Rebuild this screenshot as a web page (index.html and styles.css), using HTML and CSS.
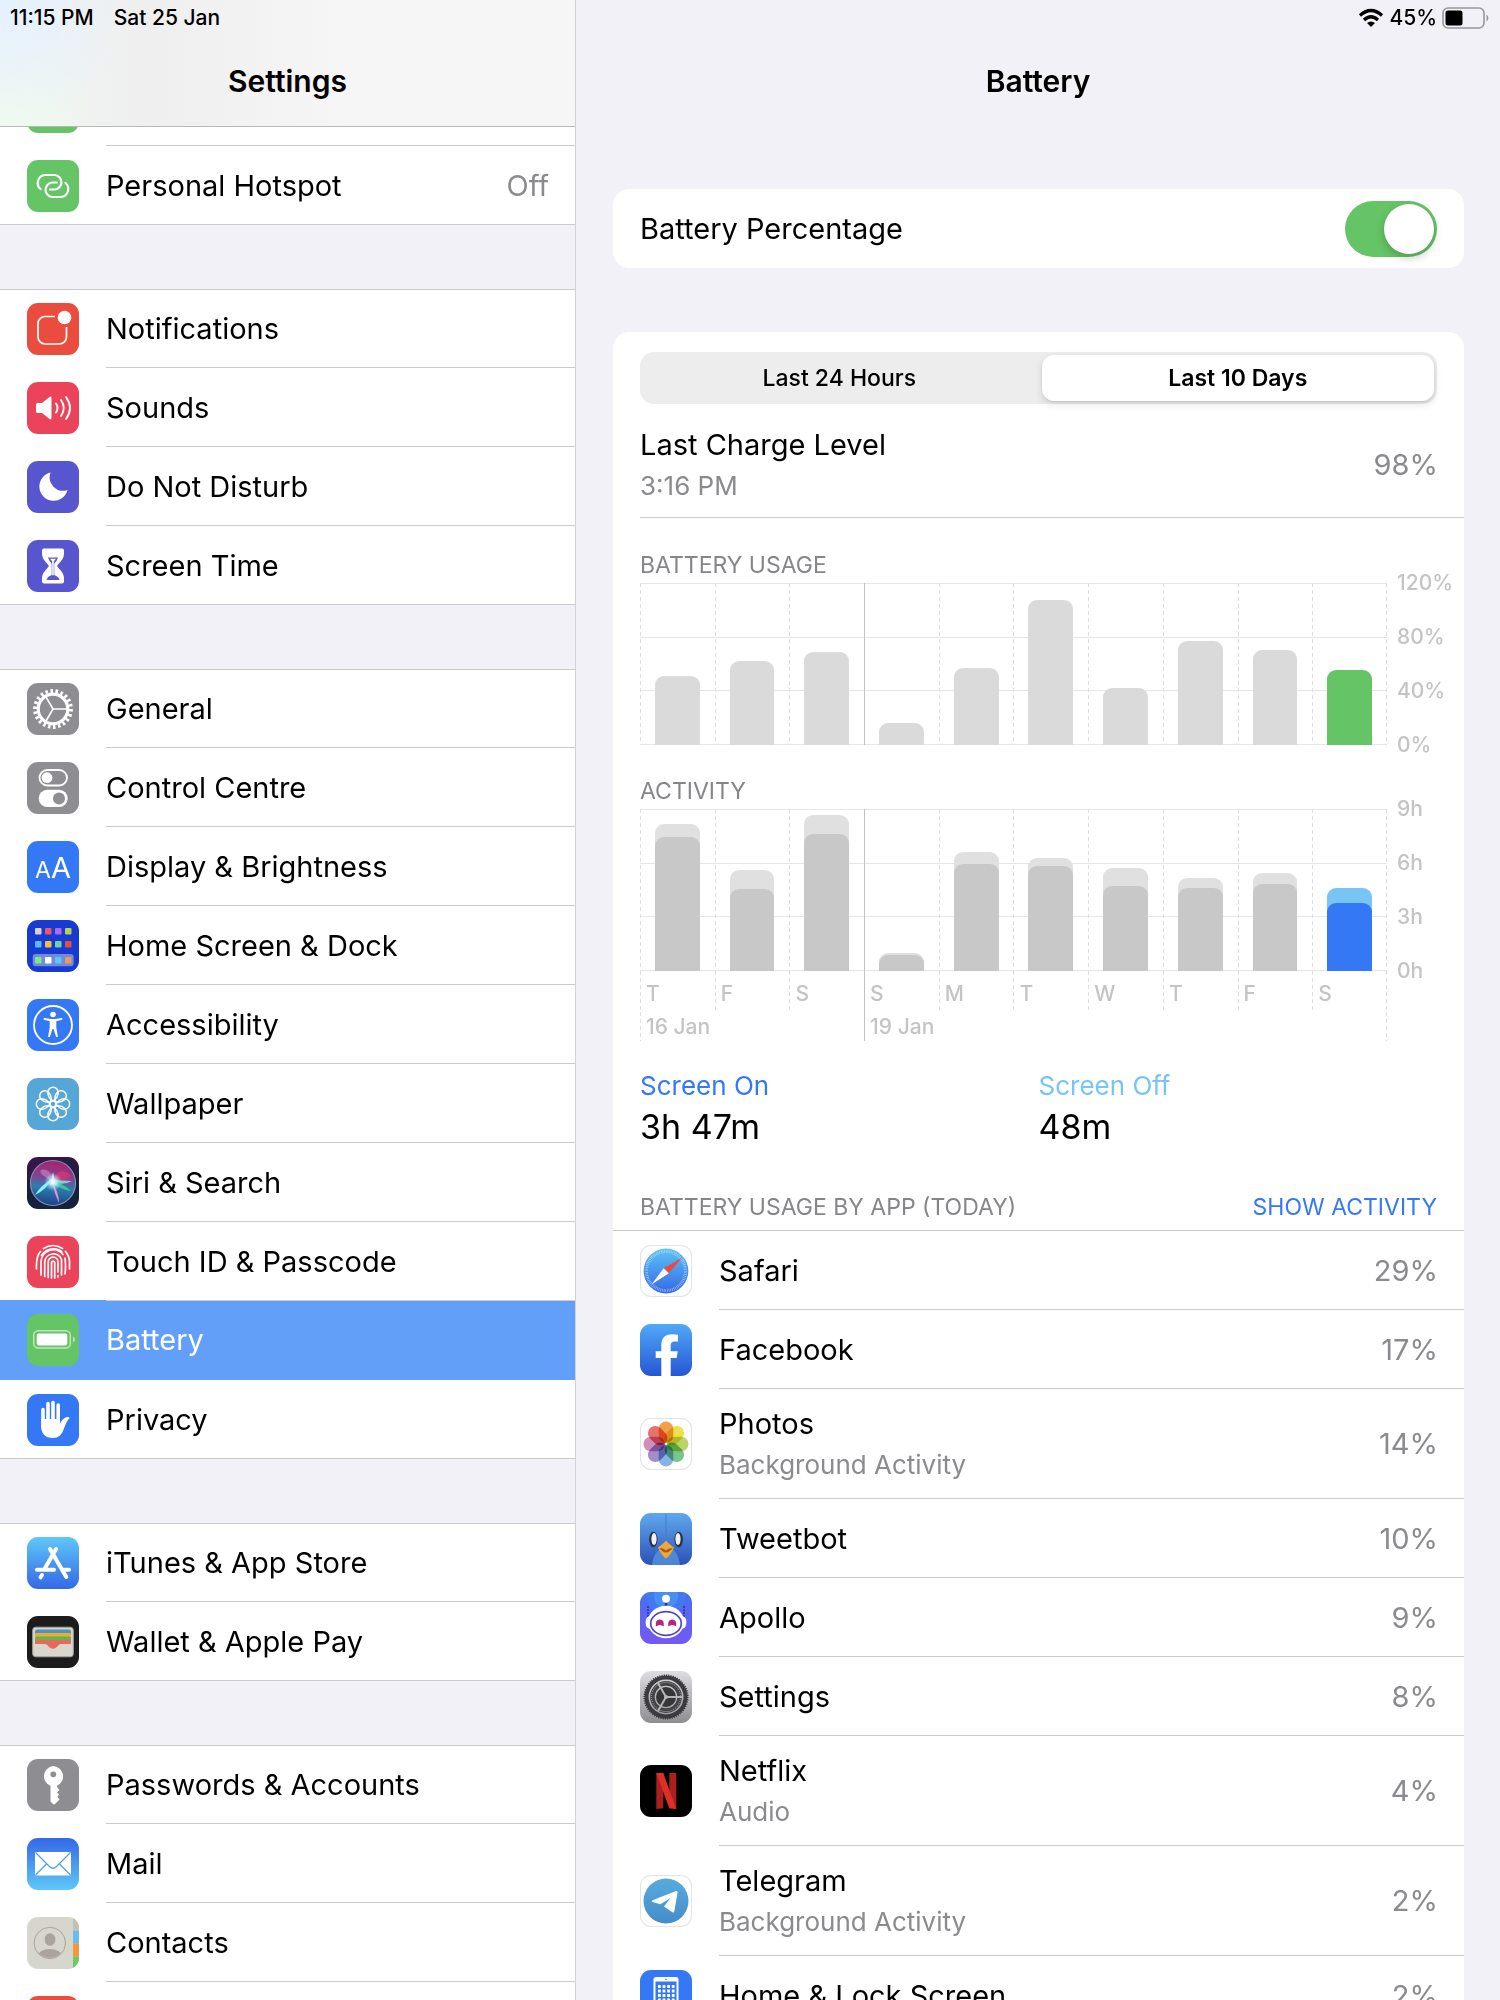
FILE: index.html
```html
<!DOCTYPE html>
<html lang="en">
<head>
<meta charset="utf-8">
<meta name="viewport" content="width=device-width, initial-scale=1">
<title>Settings</title>
<link rel="stylesheet" href="styles.css">
</head>
<body>
<div class="app">
  <nav class="sidebar" aria-label="Settings">
    <header class="bar bar-side">
      <div class="status"><span>11:15 PM</span><span>Sat 25 Jan</span></div>
      <h1 class="title">Settings</h1>
    </header>

    <div class="list">
      <div class="group">
        <a class="row" href="#"><span class="icon green"></span><span class="cell"></span></a>
        <a class="row" href="#">
          <svg class="icon green" viewBox="0 0 52 52" fill="none" stroke="#fff" stroke-width="2.2" stroke-linecap="round"><path d="M13.5 29A8 8 0 0 1 18 15H28A7.3 7.3 0 0 1 28 29.5H23M30 22.5H25A7.3 7.3 0 0 0 25 37H34A8 8 0 0 0 38.500 23"/></svg>
          <span class="cell"><span>Personal Hotspot</span><span class="value">Off</span></span>
        </a>
      </div>

      <div class="group">
        <a class="row" href="#">
          <svg class="icon red" viewBox="0 0 52 52"><path d="M28 13.500H18a7 7 0 0 0-7 7V34a7 7 0 0 0 7 7H32.500a7 7 0 0 0 7-7V24" fill="none" stroke="#fff" stroke-width="1.700"/><circle cx="37.500" cy="14.500" r="6.800" fill="#fff"/></svg>
          <span class="cell">Notifications</span>
        </a>
        <a class="row" href="#">
          <svg class="icon pink" viewBox="0 0 52 52"><path d="M9 22.500q0-1.500 1.500-1.500H15l7.500-6q2-1.200 2 1v20q0 2.200-2 1L15 31h-4.500Q9 31 9 29.500z" fill="#fff"/><path d="M29 21.500q3 4.500 0 9M34 18q5.500 8 0 16M39 15q8 11 0 22" fill="none" stroke="#fff" stroke-width="1.900" stroke-linecap="round"/></svg>
          <span class="cell">Sounds</span>
        </a>
        <a class="row" href="#">
          <svg class="icon indigo" viewBox="0 0 52 52"><path d="M23.500 11.500A14.300 14.300 0 1 0 40.500 29A13.500 13.500 0 0 1 23.500 11.500Z" fill="#fff"/></svg>
          <span class="cell">Do Not Disturb</span>
        </a>
        <a class="row" href="#">
          <svg class="icon indigo" viewBox="0 0 52 52"><path d="M15 10.500q0-2 2-2h18q2 0 2 2v3c0 6-4 8-7 12.500c3 4.500 7 6.500 7 12.500v3q0 2-2 2H17q-2 0-2-2v-3c0-6 4-8 7-12.500c-3-4.500-7-6.500-7-12.500z" fill="#fff"/><path d="M21 17.500h10q-1 3.500-3.700 6v11.500q4.500 1.500 5.200 5h-13q.7-3.500 5.200-5V23.500q-2.700-2.500-3.700-6z" fill="#5856cf"/><path d="M23 18.700h6l-2.200 2.500v14h-1.600v-14z" fill="#fff"/></svg>
          <span class="cell">Screen Time</span>
        </a>
      </div>

      <div class="group">
        <a class="row" href="#">
          <svg class="icon gray" viewBox="0 0 52 52" fill="none" stroke="#fff"><circle cx="26" cy="26" r="14.800" stroke-width="3.200"/><circle cx="26" cy="26" r="18" stroke-width="3.800" pathLength="44" stroke-dasharray="1 1"/><path d="M26 26H40M26 26L19 14M26 26L19 38" stroke-width="1.600"/></svg>
          <span class="cell">General</span>
        </a>
        <a class="row" href="#">
          <svg class="icon gray" viewBox="0 0 52 52"><rect x="12.500" y="8" width="27.500" height="15.500" rx="7.750" fill="none" stroke="#fff" stroke-width="1.800"/><circle cx="20" cy="15.700" r="5.400" fill="#fff"/><rect x="11.700" y="27.800" width="29" height="17.200" rx="8.600" fill="#fff"/><circle cx="32" cy="36.400" r="6" fill="#8e8d92"/></svg>
          <span class="cell">Control Centre</span>
        </a>
        <a class="row" href="#">
          <svg class="icon blue" viewBox="0 0 52 52" fill="#fff" text-anchor="middle"><text class="aa" x="16" y="37" font-size="23">A</text><text class="aa" x="34" y="37" font-size="29">A</text></svg>
          <span class="cell">Display &amp; Brightness</span>
        </a>
        <a class="row" href="#">
          <svg class="icon navy" viewBox="0 0 52 52"><rect x="5.700" y="34" width="41" height="12.300" rx="3" fill="#6f8ade"/><g><rect x="8" y="8" width="6.500" height="6.500" rx="1" fill="#d4d3d0"/><rect x="18" y="8" width="6.500" height="6.500" rx="1" fill="#ee5563"/><rect x="28" y="8" width="6.500" height="6.500" rx="1" fill="#ab6cf0"/><rect x="38" y="8" width="6.500" height="6.500" rx="1" fill="#b9cf52"/><rect x="8" y="21" width="6.500" height="6.500" rx="1" fill="#5bbcf5"/><rect x="18" y="21" width="6.500" height="6.500" rx="1" fill="#f6bd3f"/><rect x="28" y="21" width="6.500" height="6.500" rx="1" fill="#6fd3a4"/><rect x="38" y="21" width="6.500" height="6.500" rx="1" fill="#e84c39"/><rect x="8" y="37" width="6.500" height="6.500" rx="1" fill="#7deb7c"/><rect x="18" y="37" width="6.500" height="6.500" rx="1" fill="#fff"/><rect x="28" y="37" width="6.500" height="6.500" rx="1" fill="#5ec6f6"/><rect x="38" y="37" width="6.500" height="6.500" rx="1" fill="#f19a4f"/></g></svg>
          <span class="cell">Home Screen &amp; Dock</span>
        </a>
        <a class="row" href="#">
          <svg class="icon blue" viewBox="0 0 52 52"><circle cx="26" cy="26" r="19" fill="none" stroke="#fff" stroke-width="1.900"/><circle cx="26" cy="15.500" r="2.800" fill="#fff"/><path d="M17 19l7 1h4l7-1q1.200.8 0 1.800l-5.700 1.400v6.300l1.600 9q-.9 1.200-1.900.1L26.500 30h-1L23 37.600q-1 1.100-1.900-.1l1.600-9v-6.300L17 20.800q-1.200-1 0-1.800z" fill="#fff"/></svg>
          <span class="cell">Accessibility</span>
        </a>
        <a class="row" href="#">
          <svg class="icon sky" viewBox="0 0 52 52" fill="none" stroke="#fff" stroke-width="1.500"><defs><path id="petal" d="M26 22.800Q21 20 20.800 14.500A5.200 5.200 0 1 1 31.200 14.500Q31 20 26 22.800Z"/></defs><circle cx="26" cy="26" r="3"/><use href="#petal"/><use href="#petal" transform="rotate(45 26 26)"/><use href="#petal" transform="rotate(90 26 26)"/><use href="#petal" transform="rotate(135 26 26)"/><use href="#petal" transform="rotate(180 26 26)"/><use href="#petal" transform="rotate(225 26 26)"/><use href="#petal" transform="rotate(270 26 26)"/><use href="#petal" transform="rotate(315 26 26)"/></svg>
          <span class="cell">Wallpaper</span>
        </a>
        <a class="row" href="#">
          <svg class="icon siri" viewBox="0 0 52 52"><defs><linearGradient id="orb" x1="0.500" y1="0" x2="0.400" y2="1"><stop offset="0" stop-color="#a3246c"/><stop offset=".35" stop-color="#8a3f8e"/><stop offset=".6" stop-color="#2b7fae"/><stop offset="1" stop-color="#1d3f86"/></linearGradient><radialGradient id="glow"><stop offset="0" stop-color="#fff"/><stop offset=".4" stop-color="#c8f4ff" stop-opacity=".8"/><stop offset="1" stop-color="#7fe3f5" stop-opacity="0"/></radialGradient></defs><circle cx="26" cy="26" r="22.500" fill="url(#orb)" stroke="#8391ad" stroke-width="1.200"/><path d="M27 24C28 15 36 10 43 18C44 22 34 24 27 24z" fill="#d8356f" opacity=".8"/><path d="M25 24C18 20 11 16 14 13C20 11 26 17 27 24z" fill="#c98ac6" opacity=".6"/><path d="M26 23L45 24Q36 29 26 25z" fill="#8be8dc" opacity=".8"/><path d="M26 23Q38 28 44 34Q33 32 25 26z" fill="#39c59a"/><path d="M25 22Q20 32 8 38Q14 28 25 22z" fill="#8df1ff"/><path d="M25 25Q32 35 32 46Q27 36 25 25z" fill="#e98cd0"/><path d="M26 15L28 26L23 28z" fill="#e6f8ff"/><circle cx="26" cy="25" r="9" fill="url(#glow)"/></svg>
          <span class="cell">Siri &amp; Search</span>
        </a>
        <a class="row" href="#">
          <svg class="icon pink" viewBox="0 0 52 52" fill="none" stroke="#fff" stroke-width="1.700" stroke-linecap="round"><path d="M16.500 12.500Q26 6.500 35.500 12.500M13.500 15.500Q9 20 9.500 33M14 39V26A12.300 12.300 0 0 1 36 18.500M38.500 15.500Q43 21 42.500 27V33M38 22Q39 30 38 38M17.700 40.500V26A8.700 8.700 0 0 1 34.500 23.500V39M21.200 41.500V26A4.900 4.900 0 0 1 31 26V36M31 39.500V41M24.500 42V26.500Q26 23.500 27.700 26.500V42"/><path d="M14.500 19.500Q19 12.500 27 12.800Q32 13 35 16"/></svg>
          <span class="cell">Touch ID &amp; Passcode</span>
        </a>
        <a class="row current" href="#" aria-current="page">
          <svg class="icon green" viewBox="0 0 52 52"><rect x="6.700" y="16.800" width="36.600" height="17.200" rx="4.500" fill="none" stroke="#bfe6bb" stroke-width="1.500"/><rect x="9.700" y="19.500" width="30.600" height="12" rx="2.200" fill="#fff"/><path d="M46 22.500q4 3 0 6z" fill="#bfe6bb"/></svg>
          <span class="cell">Battery</span>
        </a>
        <a class="row" href="#">
          <svg class="icon blue" viewBox="0 0 52 52"><path d="M16 15.500V33M21 9.500V30M26 8.500V30M31.200 11V30" stroke="#fff" stroke-width="3.600" stroke-linecap="round"/><path d="M14.200 25H33v4.500q2.500-5 6-6.300q3.500-.7 3.600.7q-3.100 3-5.600 10.600q-3 9.500-11 9.500q-11.800 0-11.800-12z" fill="#fff"/></svg>
          <span class="cell">Privacy</span>
        </a>
      </div>

      <div class="group">
        <a class="row" href="#">
          <svg class="icon store" viewBox="0 0 52 52" fill="none" stroke="#fff" stroke-width="4" stroke-linecap="round"><path d="M23 12L39.300 40M29 12L17.500 32M10 32.700H27M36.500 32.700H42M15 38L13.500 40.300"/></svg>
          <span class="cell">iTunes &amp; App Store</span>
        </a>
        <a class="row" href="#">
          <svg class="icon black" viewBox="0 0 52 52"><rect x="5.700" y="11.200" width="40.600" height="29.600" rx="3" fill="#d8d7cd" stroke="#a3a29a" stroke-width="1"/><rect x="8" y="13.500" width="36" height="8" rx="2" fill="#4b93c4"/><rect x="8" y="17" width="36" height="6" rx="1.500" fill="#f0ab35"/><rect x="8" y="20.500" width="36" height="6" rx="1.500" fill="#63b54f"/><path d="M8 25.500q0-1.500 1.500-1.500h33q1.500 0 1.500 1.500V28H34c-3 0-4 4.800-8 4.800S21 28 18 28H8z" fill="#e8695c"/></svg>
          <span class="cell">Wallet &amp; Apple Pay</span>
        </a>
      </div>

      <div class="group">
        <a class="row" href="#">
          <svg class="icon gray" viewBox="0 0 52 52"><path d="M26 7a10.300 10.300 0 0 1 4 19.700v1.300l2.500 3l-2.500 2.500l2 2l-1.500 2l2 3l-4.500 4.500q-1 .8-2 0l-2.500-2.500V26.800A10.300 10.300 0 0 1 26 7z" fill="#fff"/><circle cx="26.300" cy="15.300" r="2.900" fill="#8e8d92"/></svg>
          <span class="cell">Passwords &amp; Accounts</span>
        </a>
        <a class="row" href="#">
          <svg class="icon mail" viewBox="0 0 52 52"><rect x="8" y="14" width="36" height="23.500" rx="1" fill="#fff"/><path d="M8.500 14.500L22.500 28.500Q26 32 29.500 28.500L43.500 14.500M8.500 37L19.500 26M43.500 37L32.500 26" fill="none" stroke="#4f9df3" stroke-width="1.200"/></svg>
          <span class="cell">Mail</span>
        </a>
        <a class="row" href="#">
          <svg class="icon contacts" viewBox="0 0 52 52"><defs><clipPath id="face"><circle cx="22.800" cy="26" r="15"/></clipPath></defs><path d="M46 0h6v13.700h-6z" fill="#c3c1b6"/><path d="M46 13.700h6v12.600h-6z" fill="#66bdf4"/><path d="M46 26.300h6v13.400h-6z" fill="#f0983a"/><path d="M46 39.700h6V52h-6z" fill="#6ccc63"/><circle cx="22.800" cy="26" r="15.700" fill="none" stroke="#aaa39c" stroke-width="1"/><ellipse cx="23" cy="22.500" rx="5.400" ry="6.200" fill="#aaa39c"/><ellipse cx="22.800" cy="39.500" rx="12.500" ry="7.500" fill="#aaa39c" clip-path="url(#face)"/></svg>
          <span class="cell">Contacts</span>
        </a>
        <a class="row" href="#"><span class="icon red"></span><span class="cell"></span></a>
      </div>
    </div>
  </nav>

  <main class="detail">
    <header class="bar">
      <div class="status status-end">
        <svg class="wifi" viewBox="0 0 26 20" fill="none" stroke="#000" stroke-width="3.200"><path d="M2 7.500Q13-2.500 24 7.500M6 12Q13 5.500 20 12"/><path d="M13 19L9 15Q13 11.800 17 15z" fill="#000" stroke="none"/></svg>
        <span>45%</span>
        <svg class="level" viewBox="0 0 48 22"><rect x="1" y="1" width="41" height="20" rx="5" fill="none" stroke="#98979c" stroke-width="1.600"/><rect x="3.500" y="3.500" width="17" height="15" rx="2.500"/><path d="M44.500 7.500q4 3.500 0 7z" fill="#98979c"/></svg>
      </div>
      <h2 class="title">Battery</h2>
    </header>

    <div class="content">
      <section class="card">
        <label class="toggle-row"><span>Battery Percentage</span><input class="toggle" type="checkbox" checked></label>
      </section>

      <section class="card">
        <div class="pad">
          <div class="segments">
            <button class="segment" type="button">Last 24 Hours</button>
            <button class="segment selected" type="button">Last 10 Days</button>
          </div>
        </div>

        <div class="charge">
          <div class="lines"><span>Last Charge Level</span><small>3:16 PM</small></div>
          <span class="value">98%</span>
        </div>

        <div class="charts">
          <h3 class="caption">BATTERY USAGE</h3>
          <div class="chart">
            <div class="plot">
              <div class="day"><i class="bar-fill" style="height:42.3%"></i></div>
              <div class="day"><i class="bar-fill" style="height:51.7%"></i></div>
              <div class="day"><i class="bar-fill" style="height:57.7%"></i></div>
              <div class="day week"><i class="bar-fill" style="height:13.4%"></i></div>
              <div class="day"><i class="bar-fill" style="height:47.4%"></i></div>
              <div class="day"><i class="bar-fill" style="height:89.4%"></i></div>
              <div class="day"><i class="bar-fill" style="height:34.9%"></i></div>
              <div class="day"><i class="bar-fill" style="height:64.3%"></i></div>
              <div class="day"><i class="bar-fill" style="height:58.5%"></i></div>
              <div class="day last"><i class="bar-fill today" style="height:46.2%"></i></div>
            </div>
            <div class="axis"><span>120%</span><span>80%</span><span>40%</span><span>0%</span></div>
          </div>

          <h3 class="caption">ACTIVITY</h3>
          <div class="chart">
            <div class="plot">
              <div class="day"><i class="bar-fill off" style="height:90.6%"><i class="on" style="height:91.6%"></i></i></div>
              <div class="day"><i class="bar-fill off" style="height:62.6%"><i class="on" style="height:81.3%"></i></i></div>
              <div class="day"><i class="bar-fill off" style="height:96.2%"><i class="on" style="height:88%"></i></i></div>
              <div class="day week"><i class="bar-fill off" style="height:10.9%"><i class="on" style="height:88%"></i></i></div>
              <div class="day"><i class="bar-fill off" style="height:73.4%"><i class="on" style="height:89.9%"></i></i></div>
              <div class="day"><i class="bar-fill off" style="height:69.6%"><i class="on" style="height:93.2%"></i></i></div>
              <div class="day"><i class="bar-fill off" style="height:63.6%"><i class="on" style="height:82.7%"></i></i></div>
              <div class="day"><i class="bar-fill off" style="height:57.4%"><i class="on" style="height:89.7%"></i></i></div>
              <div class="day"><i class="bar-fill off" style="height:60.6%"><i class="on" style="height:88.8%"></i></i></div>
              <div class="day last"><i class="bar-fill off now" style="height:51.1%"><i class="on" style="height:82.4%"></i></i></div>
            </div>
            <div class="axis"><span>9h</span><span>6h</span><span>3h</span><span>0h</span></div>
            <div class="days">
              <span class="day">T</span><span class="day">F</span><span class="day">S</span><span class="day week">S</span><span class="day">M</span><span class="day">T</span><span class="day">W</span><span class="day">T</span><span class="day">F</span><span class="day last">S</span>
            </div>
            <div class="weeks"><span class="day">16 Jan</span><span class="day week last">19 Jan</span></div>
          </div>

          <div class="totals">
            <div class="total screen-on"><h3>Screen On</h3><p>3h 47m</p></div>
            <div class="total screen-off"><h3>Screen Off</h3><p>48m</p></div>
          </div>
        </div>

        <div class="apps-head"><h3 class="caption">BATTERY USAGE BY APP (TODAY)</h3><button class="link" type="button">SHOW ACTIVITY</button></div>

        <ul class="apps">
          <li class="row">
            <svg class="icon white" viewBox="0 0 52 52"><defs><linearGradient id="sea" x1="0" y1="0" x2="0" y2="1"><stop offset="0" stop-color="#5cc4f7"/><stop offset="1" stop-color="#3567e6"/></linearGradient></defs><circle cx="26" cy="26" r="22.400" fill="url(#sea)"/><circle cx="26" cy="26" r="19.500" fill="none" stroke="#cfe6fc" stroke-width="3" pathLength="144" stroke-dasharray=".7 1.300" opacity=".8"/><path d="M42 12.700L28.800 28.300L23.700 23.200z" fill="#ea4b3c"/><path d="M11.500 39.500L23.700 23.200L28.800 28.300z" fill="#fff"/></svg>
            <span class="cell"><span>Safari</span><span class="value">29%</span></span>
          </li>
          <li class="row">
            <svg class="icon fb" viewBox="0 0 52 52"><path d="M21.300 52V34H15.700V27.300H21.300V21.500C21.300 13.500 25.500 10.300 32 10.300Q35 10.300 38 10.800V17.500H34.500Q30.700 17.500 30.700 21.500V27.300H37.700L36.700 34H30.700V52z" fill="#fff"/></svg>
            <span class="cell"><span>Facebook</span><span class="value">17%</span></span>
          </li>
          <li class="row tall">
            <svg class="icon white photos" viewBox="0 0 52 52"><defs><rect id="leaf" x="18.700" y="3.500" width="14.600" height="21.500" rx="7.300"/></defs><use href="#leaf" fill="#f0a24a"/><use href="#leaf" fill="#ece04c" transform="rotate(45 26 26)"/><use href="#leaf" fill="#bdd46a" transform="rotate(90 26 26)"/><use href="#leaf" fill="#7cc48e" transform="rotate(135 26 26)"/><use href="#leaf" fill="#85b3e2" transform="rotate(180 26 26)"/><use href="#leaf" fill="#a08fca" transform="rotate(225 26 26)"/><use href="#leaf" fill="#cf8fbc" transform="rotate(270 26 26)"/><use href="#leaf" fill="#e8716a" transform="rotate(315 26 26)"/></svg>
            <span class="cell"><span class="lines"><span>Photos</span><small>Background Activity</small></span><span class="value">14%</span></span>
          </li>
          <li class="row">
            <svg class="icon tweet" viewBox="0 0 52 52"><path d="M26 1V28" stroke="#3f7fcc" stroke-width="1"/><path d="M12 52Q14 36 26 34Q38 36 40 52z" fill="#5a9ae0" opacity=".7"/><ellipse cx="13.300" cy="26.500" rx="4.200" ry="7.800" fill="#2b3542"/><ellipse cx="38.700" cy="26.500" rx="4.200" ry="7.800" fill="#2b3542"/><ellipse cx="14" cy="26" rx="2.600" ry="6" fill="#f1f1f1"/><ellipse cx="38" cy="26" rx="2.600" ry="6" fill="#f1f1f1"/><path d="M26 27.500Q28 30 34 34.500Q31 42 26 45.500Q21 42 18 34.500Q24 30 26 27.500z" fill="#f2a735"/><path d="M19.500 35.500Q23 34.500 26 37.500Q29 34.500 32.500 35.500Q29 39.500 26 39.500Q23 39.500 19.500 35.500z" fill="#a85a1e"/></svg>
            <span class="cell"><span>Tweetbot</span><span class="value">10%</span></span>
          </li>
          <li class="row">
            <svg class="icon apollo" viewBox="0 0 52 52"><circle cx="26" cy="3" r="20" fill="#3f7df0" opacity=".7"/><circle cx="26" cy="4" r="12" fill="#4690f5"/><path d="M8 14V25M44 14V25" stroke="#3b35a8" stroke-width="1.800" stroke-dasharray="2 1"/><path d="M26 10V18" stroke="#3b2f9c" stroke-width="2.600"/><circle cx="26" cy="6.700" r="4" fill="#fff"/><rect x="5.700" y="24" width="40.600" height="13" rx="5" fill="#fff"/><ellipse cx="26" cy="30" rx="18" ry="16.200" fill="#fff"/><ellipse cx="26" cy="31.500" rx="15.300" ry="11.800" fill="#fff" stroke="#5145c4" stroke-width="1.700"/><path d="M15.800 34.500q-.8-7 4-7t4 7q-4-3-8 0zM28.200 34.500q-.8-7 4-7t4 7q-4-3-8 0z" fill="#b8257f"/></svg>
            <span class="cell"><span>Apollo</span><span class="value">9%</span></span>
          </li>
          <li class="row">
            <svg class="icon gear" viewBox="0 0 52 52" fill="none"><circle cx="26" cy="26" r="19.500" stroke="#3b3b3d" stroke-width="4"/><circle cx="26" cy="26" r="21.800" stroke="#3b3b3d" stroke-width="1.500" pathLength="120" stroke-dasharray="1 1"/><circle cx="26" cy="26" r="13.600" stroke="#444446" stroke-width="4.600"/><circle cx="26" cy="26" r="10" fill="#363638"/><circle cx="26" cy="26" r="14.600" stroke="#aeaeb1" stroke-width="1" pathLength="90" stroke-dasharray="1 1"/><path d="M26 26H42M26 26L18 12M26 26L18 40" stroke="#b5b5b8" stroke-width="2"/><circle cx="26" cy="26" r="2" fill="#b5b5b8"/></svg>
            <span class="cell"><span>Settings</span><span class="value">8%</span></span>
          </li>
          <li class="row tall">
            <svg class="icon onyx" viewBox="0 0 52 52"><path d="M16.300 8h7v35.300l-7 .8zM29.300 8h7v36.100l-7-.8z" fill="#a9201d"/><path d="M16.300 8h7l13 36.100q-3.500-.6-7-.8z" fill="#db2f28"/></svg>
            <span class="cell"><span class="lines"><span>Netflix</span><small>Audio</small></span><span class="value">4%</span></span>
          </li>
          <li class="row tall">
            <svg class="icon white" viewBox="0 0 52 52"><defs><linearGradient id="air" x1="0" y1="0" x2="0" y2="1"><stop offset="0" stop-color="#58abdc"/><stop offset="1" stop-color="#448dca"/></linearGradient></defs><circle cx="26" cy="26" r="22.500" fill="url(#air)"/><path d="M12.500 25.300L36 16q2-.5 1.600 1.500L34.300 36.500q-.5 1.500-2 .7L24 31.500L30.500 23L20.500 29.300L12.500 27q-1.500-.8 0-1.700z" fill="#fff"/></svg>
            <span class="cell"><span class="lines"><span>Telegram</span><small>Background Activity</small></span><span class="value">2%</span></span>
          </li>
          <li class="row">
            <svg class="icon blue" viewBox="0 0 52 52"><rect x="13.500" y="7" width="25" height="38" rx="2.500" fill="#fff"/><rect x="15.500" y="11.500" width="21" height="29" fill="#3478f6"/><path d="M18 16.500H35M18 21H35M18 25.500H35M18 30H35" stroke="#fff" stroke-width="2.800" stroke-dasharray="2.800 1.800"/><circle cx="26" cy="9.200" r=".8" fill="#3478f6"/></svg>
            <span class="cell"><span>Home &amp; Lock Screen</span><span class="value">2%</span></span>
          </li>
        </ul>
      </section>
    </div>
  </main>
</div>
</body>
</html>
```
FILE: styles.css
```css
* { box-sizing: border-box; }

body {
  margin: 0;
  background: #f2f1f7;
  color: #000;
  font: 400 29px/40px Inter, "Liberation Sans", sans-serif;
}

h1, h2, h3, p, ul { margin: 0; padding: 0; font: inherit; list-style: none; }
a { color: inherit; text-decoration: none; }
button { border: 0; padding: 0; background: none; color: inherit; font: inherit; cursor: pointer; }

.app {
  display: grid;
  grid-template-columns: 576px minmax(0, 1fr);
  height: 100vh;
  overflow: hidden;
}

/* Headers */
.bar {
  position: relative;
  z-index: 1;
  height: 127px;
  padding: 4px 10px 0;
}
.bar-side {
  border-bottom: 1px solid #b9b9bb;
  background:
    radial-gradient(circle at 0 0, #e4f1ff, #e4f1ff00 130px),
    radial-gradient(circle at 0 100%, #effcee, #effcee00 110px),
    linear-gradient(90deg, #f0f4f4, #efefef 150px, #f6f6f6 350px);
}
.status {
  display: flex;
  gap: 20px;
  font-size: 21px;
  font-weight: 500;
  line-height: 28px;
}
.status-end { justify-content: flex-end; align-items: center; gap: 5px; }
.wifi { width: 26px; height: 20px; }
.level { width: 48px; height: 22px; }
.title {
  margin-top: 29px;
  font-weight: 600;
  font-size: 30px;
  text-align: center;
}

/* Sidebar list */
.sidebar { overflow: hidden; border-right: 1px solid #d1d1d6; }
.list { display: grid; gap: 64px; margin-top: -60px; }
.group { background: #fff; box-shadow: inset 0 1px #cbcbce; }

.row { display: flex; align-items: center; height: 79px; padding-left: 27px; gap: 27px; }
.tall { height: 110px; }
.cell {
  display: flex;
  flex: 1;
  align-items: center;
  justify-content: space-between;
  align-self: stretch;
  padding: 1px 26px 0 0;
  border-bottom: 1px solid #cbcbce;
}
.group .row:last-child { box-shadow: inset 0 -1px #cbcbce; }
.row.current { height: 80px; margin-top: -1px; background: #629ff8; color: #fff; }
.current .cell { border-color: #629ff8; }
.value { color: #8b8b8f; }

.icon { flex: none; width: 52px; height: 52px; border-radius: 11px; }
.green { background: #65c466; }
.red { background: #ea4d3d; }
.pink { background: #eb445a; }
.indigo { background: #5856cf; }
.gray { background: #8e8d92; }
.blue { background: #3478f6; }
.navy { background: #173bd2; }
.sky { background: #56a6d7; }
.siri { background: linear-gradient(160deg, #3c1452, #14203c 60%, #17223f); }
.store { background: linear-gradient(#5fc8f8, #3468e6); }
.mail { background: linear-gradient(#3468e6, #5fc8f8); }
.black { background: #1c1c1c; }
.onyx { background: #000; }
.contacts { background: #d6d6cc; }
.white { background: #fff; box-shadow: inset 0 0 0 1px #e4e4e6; }
.fb { background: linear-gradient(#50a9f8, #2656d3); }
.tweet { background: linear-gradient(#60a8ee, #2b52b8); }
.apollo { background: linear-gradient(#4470f2, #7459f2); }
.gear { background: linear-gradient(#dedee1, #8d8d92); }
.photos use { mix-blend-mode: multiply; }
.aa { font-family: Inter, sans-serif; font-weight: 400; }

/* Detail pane */
.content { display: grid; gap: 64px; padding: 62px 36px 0 37px; }
.card { border-radius: 16px; background: #fff; }
.toggle-row {
  display: flex;
  align-items: center;
  justify-content: space-between;
  height: 79px;
  padding: 0 27px;
}
.toggle {
  appearance: none;
  width: 92px;
  height: 56px;
  margin: 0;
  padding: 3px;
  border-radius: 28px;
  background: #65c466;
}
.toggle::before {
  content: "";
  display: block;
  width: 50px;
  height: 50px;
  margin-left: auto;
  border-radius: 50%;
  background: #fff;
  box-shadow: 0 4px 10px #0003;
}

.pad { padding: 20px 27px 0; }
.segments {
  display: grid;
  grid-template-columns: 1fr 1fr;
  gap: 6px;
  height: 52px;
  padding: 3px;
  border-radius: 14px;
  background: #ededee;
}
.segment { border-radius: 12px; font-size: 23px; font-weight: 500; }
.selected { background: #fff; font-weight: 600; box-shadow: 0 3px 8px #0000001f, 0 1px 2px #0000001a; }

.charge {
  display: flex;
  align-items: center;
  justify-content: space-between;
  height: 114px;
  margin-left: 27px;
  padding: 20px 26px 11px 0;
  border-bottom: 1px solid #cbcbce;
}
.lines { display: grid; gap: 1px; }
.lines small { color: #8b8b8f; font-size: 26px; }

.caption { color: #86868a; font-size: 23px; line-height: 30px; }

/* Charts */
.charts { padding: 32px 0 0 27px; }
.chart {
  display: grid;
  grid-template-columns: minmax(0, 1fr) 77px;
  margin: 3px 0 31px;
  color: #c4c4c6;
  font-size: 21px;
  font-weight: 500;
  line-height: 24px;
}
.plot, .days { display: grid; grid-template-columns: repeat(10, minmax(0, 1fr)); }
.plot {
  height: 162px;
  background:
    linear-gradient(#e6e6e8 0 0) 0 0 / 100% 1px,
    linear-gradient(#e6e6e8 0 0) 0 33.3% / 100% 1px,
    linear-gradient(#e6e6e8 0 0) 0 66.7% / 100% 1px,
    linear-gradient(#e6e6e8 0 0) 0 100% / 100% 1px;
  background-repeat: no-repeat;
}
.day {
  display: flex;
  align-items: flex-end;
  justify-content: center;
  background: repeating-linear-gradient(#dfdfe1 0 4px, #fff0 4px 7px) 0 0 / 1px 100% no-repeat;
}
.day.week { background: linear-gradient(#c2c2c4 0 0) 0 0 / 1px 100% no-repeat; }
.day.last {
  background:
    repeating-linear-gradient(#dfdfe1 0 4px, #fff0 4px 7px) 0 0 / 1px 100% no-repeat,
    repeating-linear-gradient(#dfdfe1 0 4px, #fff0 4px 7px) 100% 0 / 1px 100% no-repeat;
}
.day.week.last {
  background:
    linear-gradient(#c2c2c4 0 0) 0 0 / 1px 100% no-repeat,
    repeating-linear-gradient(#dfdfe1 0 4px, #fff0 4px 7px) 100% 0 / 1px 100% no-repeat;
}
.bar-fill {
  display: flex;
  align-items: flex-end;
  width: 60%;
  border-radius: 9px 9px 0 0;
  background: #dadada;
}
.today { background: #65c466; }
.off { background: #e0e0e0; }
.on { width: 100%; border-radius: 9px 9px 0 0; background: #c8c8c8; }
.now { background: #78c5f5; }
.now .on { background: #3478f6; }
.axis {
  display: flex;
  flex-direction: column;
  justify-content: space-between;
  margin: -12px 0;
  padding-left: 10px;
}
.days, .weeks { grid-column: 1; }
.days .day, .weeks .day { justify-content: flex-start; align-items: flex-start; padding-left: 6px; }
.days .day { height: 41px; padding-top: 11px; }
.weeks { display: grid; grid-template-columns: 3fr 7fr; }
.weeks .day { height: 29px; padding-top: 3px; }

.totals { display: grid; grid-template-columns: 1fr 1fr; padding-right: 27px; margin-top: -6px; }
.total { line-height: 40px; }
.total h3 { font-size: 26px; }
.total p { font-size: 34px; line-height: 42px; }
.screen-on h3 { color: #3478f6; }
.screen-off h3 { color: #78c5f5; }

.apps-head {
  display: flex;
  align-items: center;
  justify-content: space-between;
  margin-top: 44px;
  padding: 0 27px 8px;
  border-bottom: 1px solid #cbcbce;
  font-size: 23px;
  line-height: 30px;
}
.link { color: #3478f6; }
```
